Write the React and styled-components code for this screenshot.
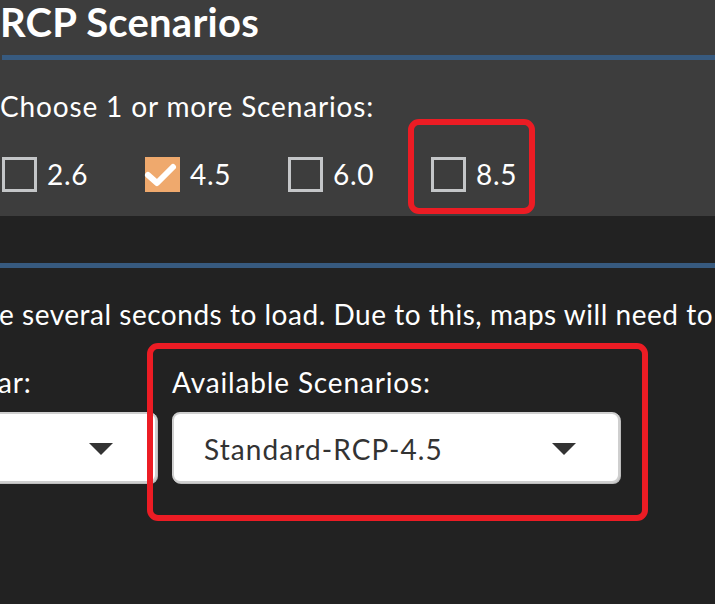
import React from "react";
import styled, { createGlobalStyle } from "styled-components";

const GlobalStyle = createGlobalStyle`
  html, body {
    margin: 0;
    padding: 0;
    background: #222222;
  }
  body {
    font-family: Lato, "Noto Sans", "Liberation Sans", sans-serif;
    color: #ffffff;
  }
  * { box-sizing: border-box; }
`;

const Page = styled.div`
  width: 715px;
  height: 604px;
  overflow: hidden;
  background: #222222;
`;

const TopPanel = styled.section`
  background: #3d3d3d;
  padding: 2px 0 24px 0;
`;

const Title = styled.h2`
  margin: 0;
  font-size: 40px;
  line-height: 40px;
  font-weight: 700;
  letter-spacing: 0.25px;
  white-space: nowrap;
`;

const Rule = styled.div`
  height: 5px;
  background: #375a7f;
  margin-top: ${(p) => p.$top}px;
  margin-left: ${(p) => p.$left || 0}px;
`;

const FieldLabel = styled.div`
  font-size: 28px;
  line-height: 40px;
  letter-spacing: 0.85px;
  white-space: nowrap;
  margin-top: ${(p) => p.$top || 0}px;
`;

const CheckRow = styled.div`
  display: grid;
  grid-template-columns: repeat(4, 143px);
  margin: 31px 0 0 2px;
`;

const CheckItem = styled.label`
  position: relative;
  display: flex;
  align-items: center;
  gap: 10px;
  height: 35px;
  font-size: 28px;
  line-height: 35px;
  letter-spacing: 0.7px;
`;

const Box = styled.span`
  width: 35px;
  height: 35px;
  flex: none;
  display: flex;
  align-items: center;
  justify-content: center;
  border: ${(p) => (p.$checked ? "none" : "3px solid #c4c6c8")};
  background: ${(p) => (p.$checked ? "#efa96d" : "transparent")};
  overflow: visible;
`;

const Highlight = styled.div`
  position: absolute;
  border: 6px solid #ec1c24;
  border-radius: 11px;
  pointer-events: none;
`;

const ItemHighlight = styled(Highlight)`
  top: -38px;
  left: -23px;
  width: 127px;
  height: 95px;
`;

const GroupHighlight = styled(Highlight)`
  top: -19px;
  left: -25px;
  right: -28px;
  bottom: -38px;
`;

const Lower = styled.section`
  padding-top: 47px;
`;

const Note = styled.p`
  margin: 26px 0 0 -1px;
  font-size: 28px;
  line-height: 40px;
  letter-spacing: 0.52px;
  white-space: nowrap;
  overflow: hidden;
`;

const ControlsRow = styled.div`
  display: flex;
  gap: 15px;
  margin-top: 28px;
`;

const Field = styled.div`
  position: relative;
  display: flex;
  flex-direction: column;
  flex: none;
  width: ${(p) => p.$width}px;
  margin-left: ${(p) => p.$offset || 0}px;
`;

const Select = styled.div`
  margin-top: 10px;
  height: 71px;
  display: flex;
  align-items: center;
  justify-content: space-between;
  padding: 2px 42px 0 30px;
  background: #ffffff;
  border: 2px solid #cfcfcf;
  border-radius: 8px;
  box-shadow: 1px 1px 0 #bdbdbd;
  color: #333333;
  font-size: 28px;
  line-height: 40px;
  letter-spacing: 1.1px;
  white-space: nowrap;
`;

const Check = () => (
  <svg width="35" height="35" viewBox="0 0 35 35" style={{ overflow: "visible" }}>
    <polyline
      points="3,18 12,26 28,10"
      fill="none"
      stroke="#ffffff"
      strokeWidth="6"
      strokeLinecap="round"
      strokeLinejoin="round"
    />
  </svg>
);

const Caret = () => (
  <svg width="24" height="12" viewBox="0 0 24 12">
    <polygon points="0,0 24,0 12,12" fill="#333333" />
  </svg>
);

const scenarios = [
  { value: "2.6", checked: false },
  { value: "4.5", checked: true },
  { value: "6.0", checked: false },
  { value: "8.5", checked: false, highlight: true },
];

export default function App() {
  return (
    <Page>
      <GlobalStyle />
      <TopPanel>
        <Title>RCP Scenarios</Title>
        <Rule $top={13} $left={2} />
        <FieldLabel $top={26}>Choose 1 or more Scenarios:</FieldLabel>
        <CheckRow>
          {scenarios.map((s) => (
            <CheckItem key={s.value}>
              <Box $checked={s.checked}>{s.checked && <Check />}</Box>
              <span>{s.value}</span>
              {s.highlight && <ItemHighlight />}
            </CheckItem>
          ))}
        </CheckRow>
      </TopPanel>
      <Lower>
        <Rule $top={0} />
        <Note>e several seconds to load. Due to this, maps will need to be reloaded.</Note>
        <ControlsRow>
          <Field $width={190} $offset={-33}>
            <FieldLabel>Year:</FieldLabel>
            <Select>
              <span />
              <Caret />
            </Select>
          </Field>
          <Field $width={448}>
            <FieldLabel>Available Scenarios:</FieldLabel>
            <Select>
              <span>Standard-RCP-4.5</span>
              <Caret />
            </Select>
            <GroupHighlight />
          </Field>
        </ControlsRow>
      </Lower>
    </Page>
  );
}
